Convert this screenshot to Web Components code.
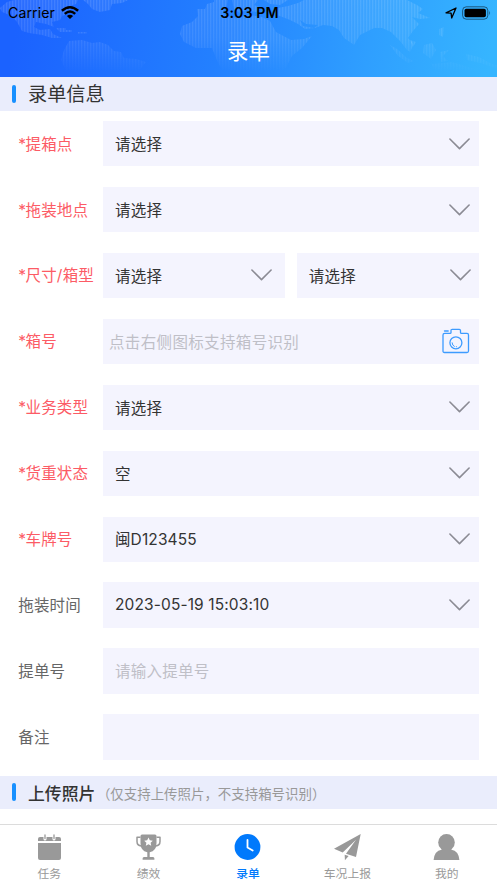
<!DOCTYPE html>
<html lang="zh-CN">
<head>
<meta charset="utf-8">
<title>录单</title>
<style>
html,body{margin:0;padding:0}
body{width:497px;height:883px;overflow:hidden;background:#fff;font-family:Inter,"Noto Sans CJK SC",sans-serif}
</style>
</head>
<body>
<order-page></order-page>
<script>
const define = (name, html) => customElements.define(name, class extends HTMLElement {
  connectedCallback() {
    if (this.shadowRoot) return;
    const a = k => this.getAttribute(k) || '';
    this.attachShadow({mode: 'open'}).innerHTML = typeof html === 'function' ? html(a) : html;
  }
});

define('world-map', `<style>:host{display:block;position:absolute;inset:0;z-index:-1}svg{display:block}</style>
<svg width="497" height="77" viewBox="0 0 497 77">
<defs>
<linearGradient id="fade" x1="0" y1="0" x2="0" y2="1"><stop offset="0" stop-color="#fff"/><stop offset=".5" stop-color="#fff" stop-opacity=".75"/><stop offset=".95" stop-color="#fff" stop-opacity="0"/></linearGradient>
<mask id="m"><rect width="497" height="77" fill="url(#fade)"/></mask>
<pattern id="p" width="3" height="3" patternUnits="userSpaceOnUse"><rect width="3" height="3" fill="#fff" fill-opacity=".07"/><rect width="1.3" height="3" fill="#fff" fill-opacity=".1"/></pattern>
</defs>
<g fill="url(#p)" mask="url(#m)">
<path d="M0 8L7 2L14 0H78L76 4L70 6L72 12L62 16L60 20L52 22L54 27L46 24L36 22L34 27L40 30L50 29L53 34L62 38L70 40L62 38L52 38L42 35L29 33L22 31L17 22L12 16L2 12Z"/>
<path d="M83 0H128L122 3L112 4L110 10L100 12L92 9L88 4Z"/>
<path d="M56 28H66V30H72V32H60Z M78 32H87V33.500H78Z"/>
<path d="M69 41L82 40L92 43L100 42L108 45L114 51L121 52L124 58L136 59L146 62L140 70L128 77H68L64 67L61 60L64 50Z"/>
<path d="M197 9H205L207 4L214 2V0H228L226 8L222 13L228 16L236 18L250 15L262 17L270 21L276 32L291 40L304 39L312 36L302 48L292 56L286 68L276 77H226L218 63L212 48L196 48L184 42L180 34L182 26L192 22L198 16Z"/>
<path d="M232 0H258L254 5L262 8L256 12L246 10L240 13L234 9Z M264 0H288L280 5L270 4Z"/>
<path d="M272 13L278 8L288 6L298 3L304 0H407L417 5L423 9L418 13L430 18L420 19L412 17L419 24L413 31L408 38L414 44L410 52L407 50L400 41L391 32L382 28L374 28L360 35L354 45L344 38L339 30L332 26L323 25L315 28L305 29L298 24L290 20Z M300 20L306 24L318 25L314 28L303 26Z" fill-rule="evenodd"/>
<path d="M390 45L397 49L407 58L414 61L408 63L398 56Z M410 40L416 42L413 47Z M424 45L432 43L436 50L431 59L423 53Z M439 29L444 27L443 37L439 35Z M440 52L449 50L443 56L448 61L441 62Z M466 54L479 57L492 64L497 65V69L480 63L467 60Z M432 64L452 62L475 69L492 77H435Z"/>
</g></svg>`);

define('status-bar', `<style>:host{height:26px;display:grid;grid-template-columns:1fr auto 1fr;align-items:center;padding:0 6px 0 8px;box-sizing:border-box;color:#000;font-size:14.200px}
span,b{margin-top:-2px}.l,.r{display:flex;align-items:center}.l{gap:6px;letter-spacing:.05px}.r{justify-content:flex-end;gap:5px}b{font-weight:600;letter-spacing:.1px}svg{display:block}.l svg{margin-top:-1px}.r svg{margin-top:-1px}</style>
<div class="l"><span>Carrier</span><svg width="18" height="13" viewBox="0 0 18 13"><g fill="none" stroke="#000" stroke-width="2.500"><path d="M.9 4.800Q9-2.200 17.100 4.800M3.800 7.900Q9 3.200 14.200 7.900"/></g><path d="M5.900 9.900Q9 7.400 12.100 9.900L9 13Z"/></svg></div>
<b>3:03 PM</b>
<div class="r"><svg width="12" height="12" viewBox="0 0 12 12"><path d="M1 5.800L11 1L6.700 11L6.100 6.200Z" fill="none" stroke="#000" stroke-width="1.300" stroke-linejoin="round"/></svg>
<svg width="29" height="14" viewBox="0 0 29 14"><rect x=".6" y=".8" width="25.200" height="12.400" rx="3.700" fill="none" stroke="#000" stroke-opacity=".5"/><rect x="2.500" y="2.700" width="21.400" height="8.600" rx="1.800"/><path d="M27.200 4.800Q29 7 27.200 9.200Z" fill-opacity=".5"/></svg></div>`);

define('app-header', `<style>:host{display:block;height:77px;position:relative;z-index:0;overflow:hidden;background:linear-gradient(100deg,#1b62ff 4%,#2380ff 44%,#2f9fff 74%,#36b5ff 98%)}
h1{margin:0;height:50px;line-height:50px;text-align:center;color:#fff;font-size:21.500px;font-weight:400}</style>
<world-map></world-map><status-bar></status-bar><h1><slot></slot></h1>`);

define('section-title', `<style>:host{display:flex;align-items:center;height:33.500px;background:#eaedfc;padding-left:12px;color:#333;font-size:19.200px;font-weight:var(--w,400)}
i{width:4px;height:18px;border-radius:2px;background:#1890ff;margin-right:12px}span{margin-top:var(--up,-2px)}::slotted(small){font-size:13.450px;color:#999;font-weight:400;margin:2px 0 0 1.500px}</style><i></i><span><slot></slot></span><slot name="note"></slot>`);

define('form-row', a => `<style>:host{display:grid;grid-template-columns:84.500px 1fr;height:45.300px;align-items:center}
label{font-size:15.500px;letter-spacing:.2px;white-space:nowrap;margin:-2px 0 0 -.3px;color:${a('required') ? '#fc5b65' : '#666'}}label b{font-weight:400;letter-spacing:-.5px}div{display:grid;grid-auto-flow:column;grid-auto-columns:1fr;gap:12px;height:100%}</style>
<label>${a('required') ? '<b>*</b>' : ''}${a('label')}</label><div><slot></slot></div>`);

define('form-field', a => `<style>:host{display:flex;box-sizing:border-box;align-items:center;justify-content:space-between;background:#f4f4fe;padding:0 var(--end,8.500px) 0 var(--start,12px);font-size:15.500px;letter-spacing:var(--ls,.25px);color:${a('kind') === 'input' ? '#bfbfc7' : '#333'}}span{margin-top:-1.500px}svg{display:block}</style>
<span><slot></slot></span>${a('kind') === 'input' ? '<slot name="icon"></slot>' : '<svg width="21" height="12" viewBox="0 0 21 12"><path d="M.9 1L10.500 10.600L20.100 1" fill="none" stroke="#8b8b94" stroke-width="1.600" stroke-linecap="round" stroke-linejoin="round"/></svg>'}`);

define('camera-icon', `<style>:host{display:block}svg{display:block}</style><svg width="28" height="26" viewBox="0 0 28 26" fill="none" stroke="#3d9bff" stroke-width="1.300" stroke-linejoin="round" stroke-linecap="round"><path d="M2.700 5.400H8.200Q8.900 5.400 9 4.600V2.500Q9 1.300 10.200 1.300H17.300Q18.500 1.300 18.500 2.500V4.600Q18.600 5.400 19.400 5.400H25Q26.500 5.400 26.500 7V23Q26.500 24.500 25 24.500H2.500Q1 24.500 1 23V7Q1 5.400 2.700 5.400Z"/><path d="M2.500 3H6.200"/><circle cx="13.900" cy="14.800" r="6"/><path d="M10.100 14.800Q10.200 17.600 12.300 18.400M14.300 18.700H14.500" stroke-width="1"/></svg>`);

const ICONS = {
  calendar: '<path d="M2 8V6Q2 4 4 4H23Q25 4 25 6V8ZM2 10H25V25Q25 27 23 27H4Q2 27 2 25Z"/><path d="M9 2V6M18 2V6" stroke="#fff" stroke-width="3" stroke-linecap="round"/><path d="M9 2V5.500M18 2V5.500" stroke="currentColor" stroke-width="1.300" stroke-linecap="round"/>',
  trophy: '<path d="M5.500 3Q5.500 1.500 7 1.500H20Q21.500 1.500 21.500 3V10Q21.500 18 14.700 19.200V24H18Q19.400 24 19.400 25.500V26.800H7.600V25.500Q7.600 24 9 24H12.300V19.200Q5.500 18 5.500 10Z"/><path d="M5.500 4.200H2V8.500Q2 12.500 6.300 13M21.500 4.200H25V8.500Q25 12.500 20.700 13" fill="none" stroke="currentColor" stroke-width="1.500" stroke-linejoin="round"/><path fill="#fff" d="M13.500 4.500L14.800 7.300L17.800 7.700L15.600 9.800L16.200 12.700L13.500 11.300L10.800 12.700L11.400 9.800L9.200 7.700L12.200 7.300Z"/>',
  clock: '<circle cx="13.500" cy="14" r="12.900"/><path d="M13.500 7V14.500L18.700 17.600" fill="none" stroke="#fff" stroke-width="1.800" stroke-linecap="round" stroke-linejoin="round"/>',
  plane: '<path d="M26.700 1L0 15.800L8.700 19.600L22 6.800L12 20.800L22 24Z"/><path d="M10.700 21.700L14.600 23L10.900 27.300Z"/>',
  person: '<circle cx="13.500" cy="9.400" r="8.300"/><path d="M8.500 15H18.500V16.800Q25.500 17.800 26.400 27H.6Q1.500 17.800 8.500 16.800Z"/>'
};
define('tab-item', a => `<style>:host{display:flex;flex-direction:column;align-items:center;padding:8.500px 1px 0 0;color:${a('active') ? '#0079fc' : '#999'};font-size:11.800px;font-weight:${a('active') ? 500 : 400}}
svg{display:block}span{line-height:18px;margin-top:4px}</style><svg width="27" height="28" viewBox="0 0 27 28" fill="currentColor">${ICONS[a('icon')]}</svg><span><slot></slot></span>`);

define('tab-bar', `<style>:host{display:grid;grid-template-columns:repeat(5,1fr);height:59.500px;box-sizing:border-box;border-top:1px solid #dcdcdc;background:#fff}</style><slot></slot>`);

define('order-page', `<style>:host{display:flex;flex-direction:column;width:497px;height:883px}
main{display:flex;flex-direction:column;gap:20.640px;padding:10.500px 18.500px 16px}
.upload{--w:500;--up:0px;font-size:16.850px}
tab-bar{margin-top:auto}.box{--start:6px;--end:9px;--ls:.35px}.pair{--end:7.500px}.first{--end:12.500px}.date{--ls:.12px}</style>
<app-header>录单</app-header>
<section-title>录单信息</section-title>
<main>
<form-row label="提箱点" required="1"><form-field>请选择</form-field></form-row>
<form-row label="拖装地点" required="1"><form-field>请选择</form-field></form-row>
<form-row label="尺寸/箱型" required="1"><form-field class="first">请选择</form-field><form-field class="pair">请选择</form-field></form-row>
<form-row label="箱号" required="1"><form-field class="box" kind="input">点击右侧图标支持箱号识别<camera-icon slot="icon"></camera-icon></form-field></form-row>
<form-row label="业务类型" required="1"><form-field>请选择</form-field></form-row>
<form-row label="货重状态" required="1"><form-field>空</form-field></form-row>
<form-row label="车牌号" required="1"><form-field class="date">闽D123455</form-field></form-row>
<form-row label="拖装时间"><form-field class="date">2023-05-19 15:03:10</form-field></form-row>
<form-row label="提单号"><form-field kind="input">请输入提单号</form-field></form-row>
<form-row label="备注"><form-field kind="input"></form-field></form-row>
</main>
<section-title class="upload">上传照片<small slot="note">（仅支持上传照片，不支持箱号识别）</small></section-title>
<tab-bar>
<tab-item icon="calendar">任务</tab-item><tab-item icon="trophy">绩效</tab-item><tab-item icon="clock" active="1">录单</tab-item><tab-item icon="plane">车况上报</tab-item><tab-item icon="person">我的</tab-item>
</tab-bar>`);
</script>
</body>
</html>
